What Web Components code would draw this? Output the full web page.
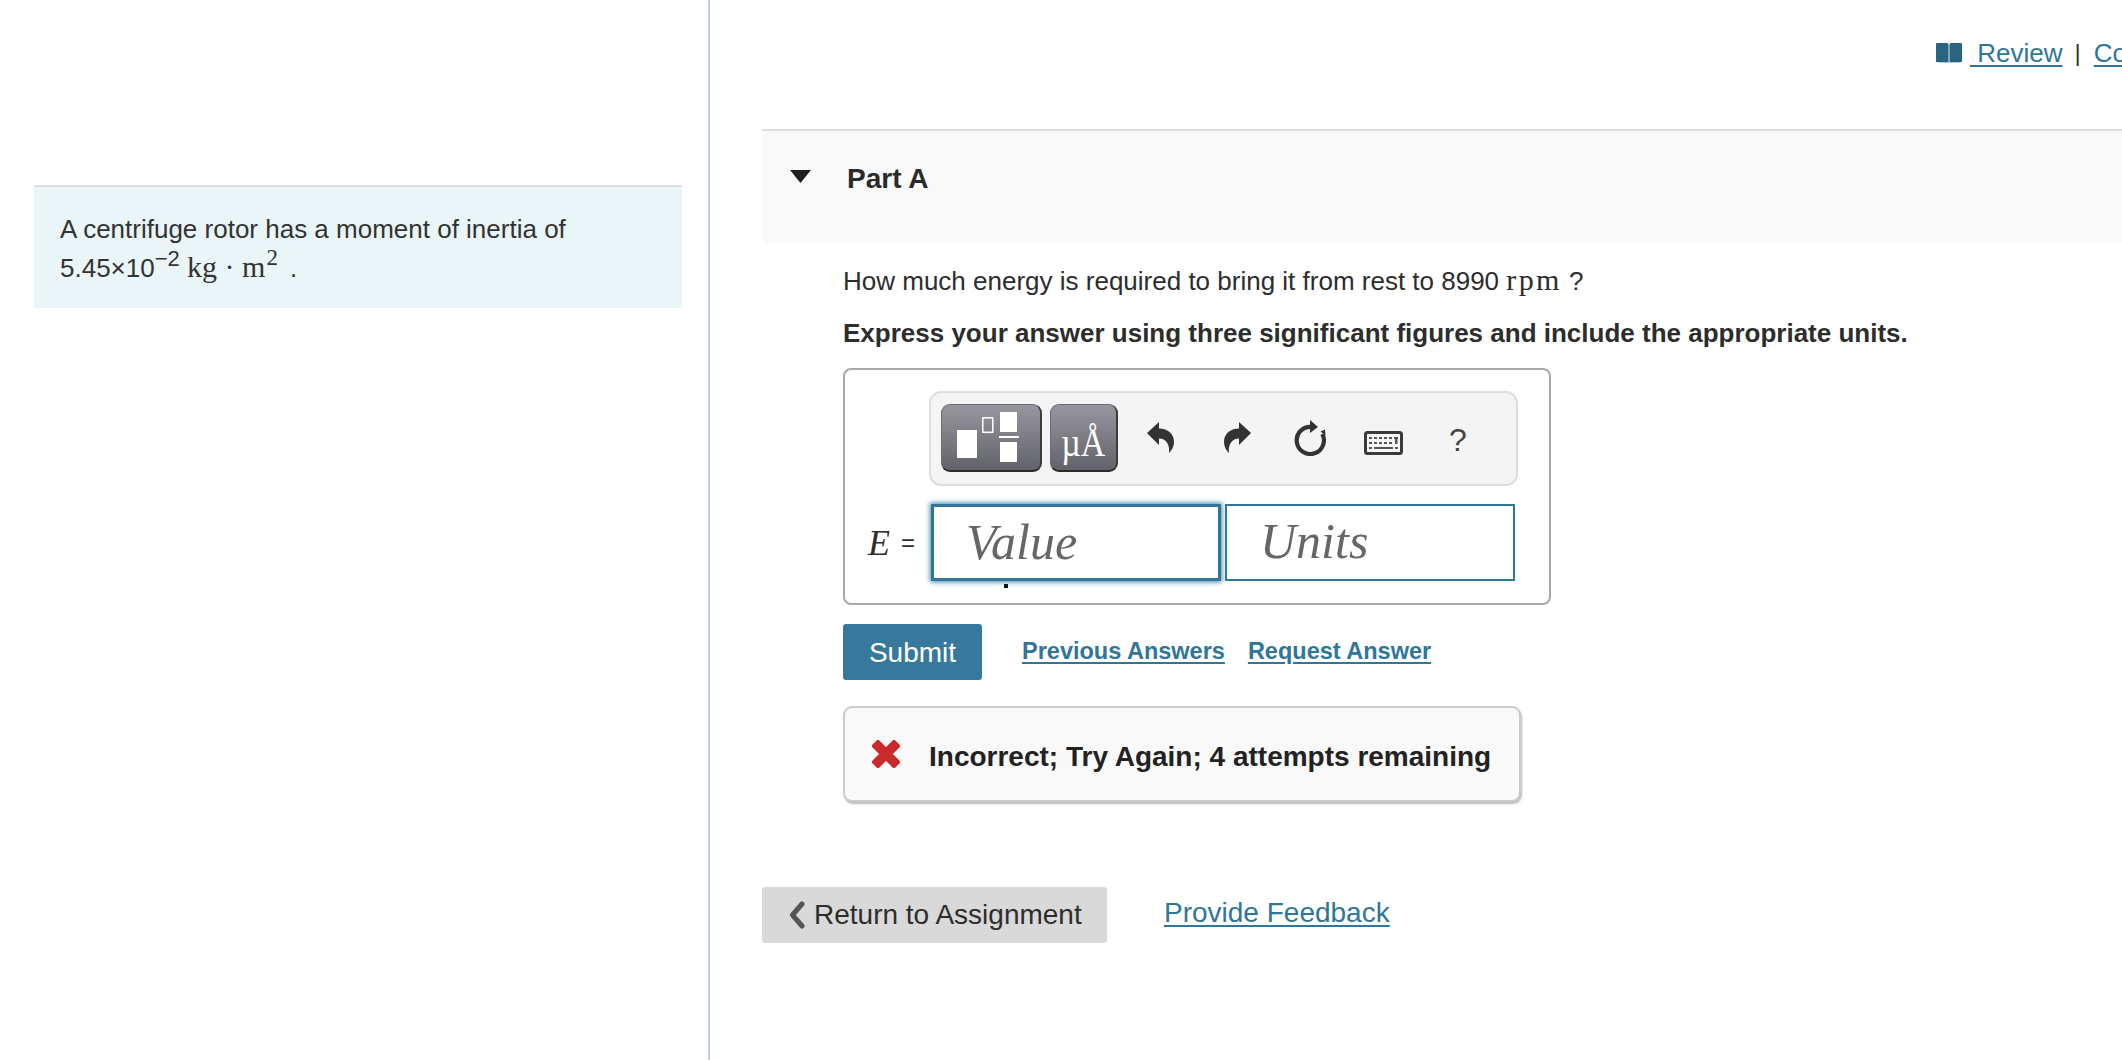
<!DOCTYPE html>
<html><head><meta charset="utf-8">
<style>
html,body{margin:0;padding:0;background:#fff;height:100%;overflow:hidden}
body{font-family:"Liberation Sans",Arial,sans-serif;color:#2d2d2d}
</style></head><body>
<app-shell>
  <side-panel slot="side">A centrifuge rotor has a moment of inertia of<br>5.45×10<sup-n>−2</sup-n> <m-th>kg · m</m-th><sup-n m>2</sup-n><span style="margin-left:5px"> .</span></side-panel>
  <top-links slot="main"></top-links>
  <part-header slot="main">Part A</part-header>
  <part-body slot="main"></part-body>
  <foot-nav slot="main"></foot-nav>
</app-shell>
<script>
function el(name, css, html){
  customElements.define(name, class extends HTMLElement{
    constructor(){super();this.attachShadow({mode:'open'}).innerHTML='<style>'+css+'</style>'+html;}
  });
}
el('app-shell',`:host{display:flex;width:2122px;height:1060px;overflow:hidden}
.l{flex:0 0 710px;box-sizing:border-box;border-right:2px solid #bccfdc;padding:185px 0 0 34px;margin:0}
.r{flex:0 0 1412px;box-sizing:border-box;padding-left:52px;min-width:0;overflow:hidden}`,
`<div class="l"><slot name="side"></slot></div><div class="r"><slot name="main"></slot></div>`);

el('side-panel',`:host{display:block;width:648px;height:123px;box-sizing:border-box;background:#e9f5f7;border-top:2px solid #dcdfe0;padding:24px 26px 0;font-size:26px;line-height:37px;color:#333}`,`<slot></slot>`);
el('sup-n',`:host{font-size:22px;position:relative;top:-11px;line-height:0}:host([m]){font-family:"Liberation Serif",serif;font-size:23px;margin-left:1px;top:-12px}`,`<slot></slot>`);
el('m-th',`:host{font-family:"Liberation Serif",serif;font-size:30px;letter-spacing:0}`,`<slot></slot>`);

el('top-links',`:host{display:flex;height:129px;box-sizing:border-box;padding:38px 0 0 1174px;align-items:flex-start;font-size:26px;line-height:30px;white-space:nowrap;color:#333}
svg{flex:none;margin-top:4px}
a{color:#2f7698;text-decoration:underline;text-underline-offset:3px}
.s{margin:0 13px 0 12px;font-size:24px}`,
`<svg width="26" height="21" viewBox="0 0 26 21"><path fill="#2a6580" d="M0 2Q0 1 1 1H11Q12.300 1 12.500 2.500V20H0zM13.500 2.500Q13.700 1 15 1H25Q26 1 26 2V20H13.500z"/><path fill="#2a6580" opacity=".35" d="M12.500 2H13.500V20H12.500zM2 20H24V21H2z"/></svg><a href="#" style="margin-left:8px">&nbsp;Review</a><span class="s">|</span><a href="#">Course Home</a>`);

el('part-header',`:host{display:flex;height:114px;box-sizing:border-box;background:#f9f9f9;border-top:2px solid #dfdfdf;padding:28px 0 0 28px;font-weight:700;font-size:28px;line-height:40px;color:#2a2a2a;align-items:flex-start}
svg{margin:11px 36px 0 0;flex:none}`,
`<svg width="21" height="13" viewBox="0 0 21 13"><path fill="#1f1f1f" d="M0 0H21L10.500 13z"/></svg><slot></slot>`);

el('part-body',`:host{display:block;padding:19px 0 0 81px}
.q{font-size:26px;line-height:38px;color:#2d2d2d;white-space:nowrap}
.q i{font:normal 30px "Liberation Serif",serif;letter-spacing:2.400px}
.b{font-size:26px;font-weight:700;line-height:38px;margin-top:14px;white-space:nowrap}
.row{display:flex;align-items:center;margin-top:19px}`,
`<div class="q">How much energy is required to bring it from rest to 8990 <i>rpm</i> ?</div>
<div class="b">Express your answer using three significant figures and include the appropriate units.</div>
<answer-box style="margin-top:16px"></answer-box>
<div class="row"><submit-row></submit-row></div>
<feedback-box style="margin-top:26px"></feedback-box>`);

el('answer-box',`:host{display:block;width:708px;height:237px;box-sizing:border-box;border:2px solid #a9a9a9;border-radius:8px;padding:21px 0 0 84px;position:relative}
.in{display:flex;margin-top:18px;margin-left:-62px;align-items:center}
.e{width:64px;flex:none;font:24px/44px "Liberation Sans",sans-serif;white-space:nowrap;color:#2d2d2d;box-sizing:border-box;padding-right:16px;text-align:right;display:flex;justify-content:flex-end}
.e i{font:italic 36px/44px "Liberation Serif",serif;margin-right:11px}
.dot{position:absolute;left:159px;top:214px;width:4px;height:4px;background:#111}`,
`<mq-toolbar></mq-toolbar>
<div class="in"><div class="e"><i>E</i>=</div><value-field focus>Value</value-field><value-field style="margin-left:4px">Units</value-field></div>
<div class="dot"></div>`);

el('value-field',`:host{display:block;width:290px;height:77px;box-sizing:border-box;border:2px solid #2f7698;background:#fff;font:italic 50px/71px "Liberation Serif",serif;color:#666;padding-left:33px}
:host([focus]){border-width:3px;box-shadow:0 0 5px 1px #3f87a8;padding-left:32px}`,`<slot></slot>`);

el('mq-toolbar',`:host{display:flex;width:589px;height:95px;box-sizing:border-box;background:#f4f4f4;border:2px solid #dedede;border-radius:12px;padding:11px 0 0 10px;align-items:flex-start}
.btn{height:68px;box-sizing:border-box;border-radius:9px;background:linear-gradient(#98969f,#62636a);border:1px solid #6a6a70;border-bottom:2px solid #2a2a2a;border-right:2px solid #3c3c3c;flex:none;display:block}
.t{width:101px}.u{width:68px;margin-left:8px;color:#fff;font:39px/1 "Liberation Serif",serif;text-align:center;line-height:76px;white-space:nowrap}
.u span{display:inline-block;transform:scaleX(.87)}
.ic{flex:none;display:block}`,
`<svg class="btn t" width="101" height="68" viewBox="0 0 98 65"><g fill="#fff"><rect x="15" y="25" width="20" height="28"/><rect x="58" y="7" width="17" height="20"/><rect x="58" y="37" width="17" height="20"/><rect x="57" y="31" width="20" height="2"/></g><rect x="40.800" y="12.800" width="10" height="14.500" fill="none" stroke="#fff" stroke-width="1.500"/></svg>
<div class="btn u"><span>µÅ</span></div>
<svg class="ic" style="margin:18px 0 0 29px" width="27" height="31" viewBox="0 0 27 31"><path fill="#333" d="M0 11 12 0V6.500C21 6.500 27 12 27 20 27 25 24 29 22 31 23 24 20 16.500 12 16.500V23z"/></svg>
<svg class="ic" style="margin:18px 0 0 50px" width="27" height="31" viewBox="0 0 27 31"><path fill="#333" d="M27 11 15 0V6.500C6 6.500 0 12 0 20 0 25 3 29 5 31 4 24 7 16.500 15 16.500V23z"/></svg>
<svg class="ic" style="margin:16px 0 0 43px" width="32" height="36" viewBox="0 0 32 36"><path fill="none" stroke="#333" stroke-width="4.200" d="M16.500 6.800A13.600 13.600 0 1 0 28.300 14"/><path fill="#333" d="M16 0 24 7 16 13zM26.500 11.500 31 9.500 31.500 15.500z"/></svg>
<svg class="ic" style="margin:27px 0 0 38px" width="39" height="24" viewBox="0 0 39 24"><rect x="1.500" y="1.500" width="36" height="21" rx="2" fill="#f7f7f7" stroke="#3a3a3a" stroke-width="3"/><g fill="#555"><rect x="5" y="6" width="3" height="2"/><rect x="10" y="6" width="3" height="2"/><rect x="15" y="6" width="3" height="2"/><rect x="20" y="6" width="3" height="2"/><rect x="25" y="6" width="3" height="2"/><rect x="30" y="6" width="4" height="2"/><rect x="5" y="11" width="3" height="2"/><rect x="10" y="11" width="3" height="2"/><rect x="15" y="11" width="3" height="2"/><rect x="20" y="11" width="3" height="2"/><rect x="25" y="11" width="3" height="2"/><rect x="31" y="8" width="2.500" height="5"/><rect x="5" y="16" width="3" height="2"/><rect x="10" y="16" width="19" height="2"/><rect x="31" y="16" width="3" height="2"/></g></svg>
<div class="ic" style="margin:16px 0 0 46px;font:32px/40px 'Liberation Sans',sans-serif;color:#444">?</div>`);

el('submit-row',`:host{display:flex;align-items:center;font-size:23.500px;font-weight:700}
.s{width:139px;height:56px;background:#37799d;border-radius:3px;color:#fff;font-size:28px;font-weight:400;line-height:57px;text-align:center;margin-right:40px}
a{color:#2f7698;text-decoration:underline;text-underline-offset:3px;margin:-1px 23px 0 0;white-space:nowrap}`,
`<div class="s">Submit</div><a href="#">Previous Answers</a><a href="#">Request Answer</a>`);

el('feedback-box',`:host{display:flex;align-items:center;width:678px;height:96px;box-sizing:border-box;background:#f9f9f9;border:2px solid #ccc;border-radius:9px;box-shadow:1px 2px 2px #bbb;padding:0 0 0 27px;font-weight:700;font-size:28px;color:#222;white-space:nowrap}
svg{flex:none;margin-right:29px}
span{position:relative;top:3px}`,
`<svg width="28" height="28" viewBox="0 0 28 28"><path fill="#cb2a2a" stroke="#cb2a2a" stroke-width="4" stroke-linejoin="round" d="M6 2 14 10 22 2 26 6 18 14 26 22 22 26 14 18 6 26 2 22 10 14 2 6z"/></svg><span>Incorrect; Try Again; 4 attempts remaining</span>`);

el('foot-nav',`:host{display:flex;align-items:flex-start;margin-top:85px}
.b{display:flex;align-items:center;width:345px;height:56px;box-sizing:border-box;background:#d9d9d9;border-radius:3px;font-size:28px;color:#2d2d2d;padding-left:27px;white-space:nowrap}
svg{margin-right:9px;flex:none}
a{margin:10px 0 0 57px;font-size:28px;color:#2f7698;text-decoration:underline;text-underline-offset:3px;white-space:nowrap}`,
`<div class="b"><svg width="16" height="28" viewBox="0 0 16 28"><path fill="none" stroke="#555" stroke-width="5" stroke-linecap="round" stroke-linejoin="round" d="M13 3 3.500 14 13 25"/></svg>Return to Assignment</div><a href="#">Provide Feedback</a>`);
</script></body></html>
